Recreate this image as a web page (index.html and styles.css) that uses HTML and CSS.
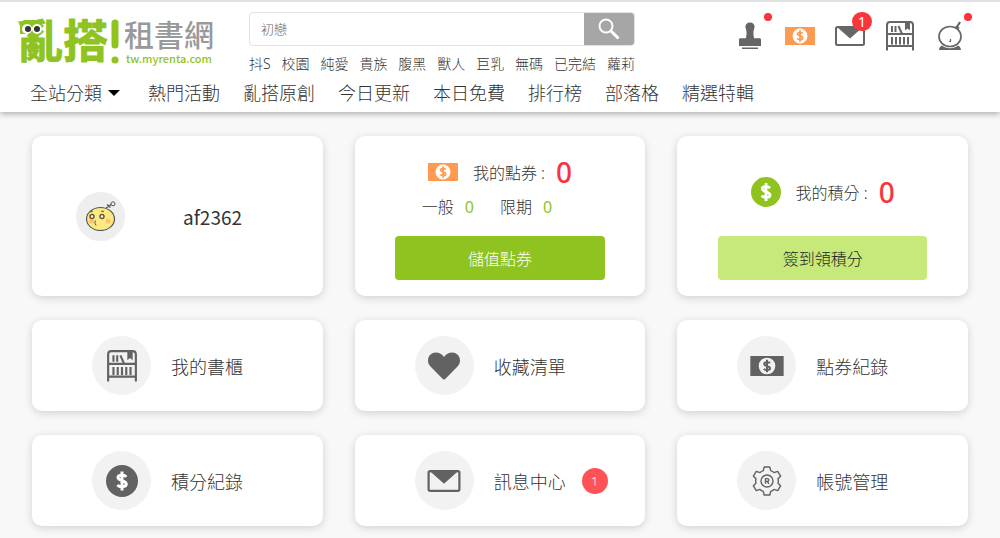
FILE: index.html
```html
<!doctype html>
<html lang="zh-Hant">
<head>
<meta charset="utf-8">
<meta name="viewport" content="width=device-width,initial-scale=1">
<title>亂搭!租書網</title>
<link rel="stylesheet" href="styles.css">
</head>
<body>
<!-- icons -->
<svg class="sprite" aria-hidden="true">
	<symbol id="i-stamp" viewBox="0 0 24 28">
		<path d="M12 0.5c2.800 0 4.600 1.800 4.600 4.300 0 1.600-.7 2.600-1 4.200-.3 2.200-.2 5 .6 7.200h5.300c1 0 1.500.6 1.500 1.500V24H1v-6.300c0-.9.5-1.500 1.500-1.500h5.300c.8-2.200.9-5 .6-7.200-.3-1.600-1-2.600-1-4.200C7.400 2.300 9.200.5 12 .5z"/>
		<path d="M4 25.500h16v1.500H4z"/>
	</symbol>
	<symbol id="i-bill" viewBox="0 0 30 18">
		<path fill-rule="evenodd" d="M0 0h30v18H0zM15 1.500a7.500 7.500 0 1 0 0 15 7.500 7.500 0 0 0 0-15z"/>
		<path d="M15 3.300v11.400M17.700 6.500c-1-1.300-5.200-1.400-5.200.6 0 2.200 5.200 1.500 5.200 3.900 0 2.100-4.300 2-5.500.5" fill="none" stroke="currentColor" stroke-width="1.800"/>
	</symbol>
	<symbol id="i-mail" viewBox="0 0 30 20">
		<rect x="1" y="1" width="28" height="18" rx="1.500" fill="none" stroke="currentColor" stroke-width="2"/>
		<path d="M2 1h26L15 12.500z"/>
	</symbol>
	<symbol id="i-shelf" viewBox="0 0 30 30">
		<path d="M2 29.500V4q0-3 3-3h20q3 0 3 3v25.500M2 13h26M2 25h26" fill="none" stroke="currentColor" stroke-width="2"/>
		<path d="M7 5v6M10.500 5v6M13.500 5l3.500 8M7 16v7.500M11 16v7.500M15 16v7.500M19 16v7.500M23 16v7.500" fill="none" stroke="currentColor" stroke-width="2"/>
		<path d="M20 1h5v8.500L22.500 7.500 20 9.500z"/>
	</symbol>
	<symbol id="i-planet" viewBox="0 0 26 30">
		<ellipse cx="13" cy="15.500" rx="11" ry="10" fill="none" stroke="currentColor" stroke-width="1.700"/>
		<path d="M5 24.500c4 3.600 12 3.600 16 0 2 1 2.800 2.500 3 4.500H2c.2-2 1-3.500 3-4.500z"/>
		<path d="M19 7.500l4-6.500M18.500 5.500l3.500 2" fill="none" stroke="currentColor" stroke-width="2.200"/>
		<path d="M13.500 18v2.500h-1.300" fill="none" stroke="currentColor" stroke-width="1.200"/>
	</symbol>
	<symbol id="i-coin" viewBox="0 0 32 32">
		<circle cx="16" cy="16" r="16"/>
		<path d="M16 6.500v19M20.300 11.800c-1.500-2-8.300-2.500-8.300.8 0 3.600 8.300 2.600 8.300 6.500 0 3.300-6.800 3.200-8.900.8" fill="none" stroke="#fff" stroke-width="3"/>
	</symbol>
	<symbol id="i-heart" viewBox="0 0 32 28">
		<path d="M16 27.500c-.7 0-1.200-.5-1.700-1L2.500 14.500C.8 12.700 0 10.700 0 8.500 0 3.700 3.600.5 8 .5c3.400 0 6 1.600 8 4.500 2-2.900 4.600-4.500 8-4.500 4.400 0 8 3.200 8 8 0 2.200-.8 4.200-2.500 6L17.700 26.500c-.5.5-1 1-1.700 1z"/>
	</symbol>
	<symbol id="i-gear" viewBox="0 0 30 30">
		<g fill="none" stroke="currentColor" stroke-width="1.400" stroke-linejoin="round">
			<path d="M12.200 1h5.600l.9 3.600q2 .6 3.300 2l3.700-1.200 2.900 4.800-2.600 2.600q.7 2.200 0 4.400l2.600 2.600-2.900 4.800-3.700-1.200q-1.300 1.400-3.300 2l-.9 3.600h-5.600l-.9-3.600q-2-.6-3.300-2l-3.700 1.200-2.900-4.800L4 17.200q-.7-2.200 0-4.400l-2.600-2.600 2.900-4.800L8 6.600q1.300-1.400 3.300-2z"/>
			<circle cx="15" cy="15" r="6"/>
			<path d="M13.500 17.800v-5.200h1.800q1.500 0 1.500 1.400t-1.500 1.400h-1.500M15.300 15.400l1.600 2.400"/>
		</g>
	</symbol>
</svg>

<header class="header">
	<div class="top">
		<a class="logo" href="#" aria-label="亂搭!租書網">
			<svg viewBox="0 0 200 50" width="200" height="50">
				<g class="logo-main">
					<text x="0" y="42">亂搭</text>
					<path d="M97 7v22" stroke-width="7"/>
					<circle cx="97" cy="44" r="3.500" stroke="none"/>
				</g>
				<path d="M0 5c3 1 5 0 6-1h9c2 1 4 2 8 1l-2 5v8H2v-8z" fill="#8fc31f"/>
				<circle cx="9" cy="13" r="5" fill="#fff"/>
				<circle cx="19" cy="13" r="5" fill="#fff"/>
				<circle cx="10" cy="13" r="3"/>
				<circle cx="19" cy="13" r="3"/>
				<text class="logo-name" x="106" y="30">租書網</text>
				<text class="logo-url" x="108" y="47">tw.myrenta.com</text>
			</svg>
		</a>
		<div class="search">
			<form class="search-box">
				<input type="text" placeholder="初戀" aria-label="搜尋">
				<button type="button" aria-label="搜尋">
					<svg viewBox="0 0 22 22" width="22" height="22"><circle cx="8" cy="8" r="6.500"/><path d="M13 13l7.500 7.500" stroke-width="3"/></svg>
				</button>
			</form>
			<div class="tags">
				<a href="#">抖S</a>
				<a href="#">校園</a>
				<a href="#">純愛</a>
				<a href="#">貴族</a>
				<a href="#">腹黑</a>
				<a href="#">獸人</a>
				<a href="#">巨乳</a>
				<a href="#">無碼</a>
				<a href="#">已完結</a>
				<a href="#">蘿莉</a>
			</div>
		</div>
		<div class="tools">
			<a href="#" aria-label="簽到"><svg width="24" height="28"><use href="#i-stamp"/></svg><i class="dot"></i></a>
			<a href="#" aria-label="點券" class="orange"><svg width="30" height="18"><use href="#i-bill"/></svg></a>
			<a href="#" aria-label="訊息"><svg width="30" height="20"><use href="#i-mail"/></svg><span class="num">1</span></a>
			<a href="#" aria-label="書櫃"><svg width="30" height="30"><use href="#i-shelf"/></svg></a>
			<a href="#" aria-label="會員"><svg width="26" height="30"><use href="#i-planet"/></svg><i class="dot"></i></a>
		</div>
	</div>
	<nav class="nav">
		<button type="button" class="all">全站分類<svg width="12" height="6" viewBox="0 0 12 6"><path d="M0 0h12L6 6z"/></svg></button>
		<a href="#">熱門活動</a>
		<a href="#">亂搭原創</a>
		<a href="#">今日更新</a>
		<a href="#">本日免費</a>
		<a href="#">排行榜</a>
		<a href="#">部落格</a>
		<a href="#">精選特輯</a>
	</nav>
</header>

<main class="main">
	<section class="card user">
		<span class="avatar">
			<svg viewBox="0 0 30 30" width="30" height="30">
				<path d="M20 7c2-1 3-2 5.500-4M21 3.500l3.500 3" fill="none" stroke="#555" stroke-width="1.200"/>
				<circle cx="27" cy="2.800" r="2" fill="#eee" stroke="#555"/>
				<ellipse cx="14.500" cy="18" rx="14" ry="11.500" fill="#fbe983" stroke="#555" stroke-width="1.200"/>
				<circle cx="5.500" cy="20" r="2.500" fill="#fbc46d"/>
				<circle cx="22" cy="20" r="2.500" fill="#fbc46d"/>
				<circle cx="6" cy="15.500" r="2" fill="#fff" stroke="#665b30" stroke-width="1.500"/>
				<circle cx="16" cy="15.500" r="2" fill="#fff" stroke="#665b30" stroke-width="1.500"/>
				<path d="M9.500 19.500l-.8 2.500 1.500 2.500M4 11l3-.8M15 10l3 .5" fill="none" stroke="#665b30"/>
			</svg>
		</span>
		<span class="user-name">af2362</span>
	</section>
	<section class="card wallet">
		<div class="wallet-info">
			<p class="total"><svg class="orange" width="30" height="18"><use href="#i-bill"/></svg><span>我的點券 :</span><b>0</b></p>
			<p class="detail"><span>一般<em>0</em></span><span>限期<em>0</em></span></p>
		</div>
		<button type="button" class="btn">儲值點券</button>
	</section>
	<section class="card wallet score">
		<div class="wallet-info">
			<p class="total"><svg class="green" width="30" height="30"><use href="#i-coin"/></svg><span>我的積分 :</span><b>0</b></p>
		</div>
		<button type="button" class="btn btn-light">簽到領積分</button>
	</section>

	<a class="card link" href="#"><span class="ico"><svg width="32" height="32"><use href="#i-shelf"/></svg></span>我的書櫃</a>
	<a class="card link" href="#"><span class="ico"><svg width="34" height="28"><use href="#i-heart"/></svg></span>收藏清單</a>
	<a class="card link" href="#"><span class="ico"><svg width="34" height="20"><use href="#i-bill"/></svg></span>點券紀錄</a>
	<a class="card link" href="#"><span class="ico"><svg width="32" height="32"><use href="#i-coin"/></svg></span>積分紀錄</a>
	<a class="card link" href="#"><span class="ico"><svg width="34" height="22"><use href="#i-mail"/></svg></span>訊息中心<span class="count">1</span></a>
	<a class="card link" href="#"><span class="ico"><svg width="30" height="30"><use href="#i-gear"/></svg></span>帳號管理</a>
</main>
</body>
</html>
```
FILE: styles.css
```css
* {
	box-sizing: border-box;
}
body {
	margin: 0;
	background: #f8f8f8;
	color: #333;
	font-family: "Noto Sans", "Noto Sans CJK TC", sans-serif;
	font-weight: 300;
}
p {
	margin: 0;
}
a {
	color: inherit;
	text-decoration: none;
}
button,
input {
	margin: 0;
	padding: 0;
	border: 0;
	background: none;
	color: inherit;
	font: inherit;
}
button {
	cursor: pointer;
}
svg {
	display: block;
	flex: none;
	fill: currentColor;
}
.sprite {
	position: absolute;
	width: 0;
	height: 0;
}
.orange {
	color: #ff9b50;
}
.green {
	color: #8fc31f;
}

/* header */
.header {
	position: relative;
	border-top: 2px solid #e2e2e2;
	background: #fff;
	box-shadow: 0 2px 6px rgba(0,0,0,.3);
}
.top {
	display: flex;
	align-items: flex-start;
	padding: 10px 25px 0 18px;
}
.logo {
	margin: 4px 31px 0 0;
}
.logo svg {
	overflow: visible;
}
.logo-main {
	fill: #8fc31f;
	stroke: #8fc31f;
	stroke-width: 1;
	stroke-linecap: round;
	stroke-linejoin: round;
	font-size: 45px;
	font-weight: 700;
}
.logo-name {
	fill: #999;
	font-size: 30px;
	font-weight: 500;
}
.logo-url {
	fill: #8fc31f;
	font-family: "Noto Sans CJK TC", sans-serif;
	font-size: 11px;
	font-weight: 500;
}
.search {
	flex: 0 1 386px;
}
.search-box {
	display: flex;
	height: 34px;
	border: 1px solid #e2e2e2;
	border-radius: 4px;
	overflow: hidden;
}
.search-box input {
	flex: 1;
	min-width: 0;
	padding: 0 11px;
	outline: 0;
	font-size: 13px;
}
.search-box input::placeholder {
	color: #666;
}
.search-box button {
	display: flex;
	align-items: center;
	justify-content: center;
	width: 50px;
	background: #a6a6a6;
}
.search-box svg {
	fill: none;
	stroke: #fff;
	stroke-width: 2;
}
.tags {
	display: flex;
	justify-content: space-between;
	margin-top: 7px;
	font-size: 14px;
	line-height: 22px;
	white-space: nowrap;
}
.tools {
	display: flex;
	margin-left: auto;
	color: #666;
}
.tools a {
	position: relative;
	display: flex;
	align-items: center;
	justify-content: center;
	width: 50px;
	height: 48px;
}
.tools .orange {
	color: #ff9b50;
}
.dot {
	position: absolute;
	right: 3px;
	top: 1px;
	width: 8px;
	height: 8px;
	border-radius: 50%;
	background: #f9343b;
}
.num {
	position: absolute;
	right: 3px;
	top: 0;
	width: 20px;
	border-radius: 10px;
	background: #f9343b;
	color: #fff;
	font-size: 14px;
	font-weight: 400;
	line-height: 19px;
	text-align: center;
}
.nav {
	display: flex;
	gap: 23px;
	padding: 2px 30px 3px;
	font-size: 18px;
	line-height: 32px;
	white-space: nowrap;
}
.all {
	display: flex;
	align-items: center;
	gap: 6px;
	margin-right: 5px;
}
.all svg {
	color: #000;
}

/* cards */
.main {
	display: grid;
	grid-template-columns: repeat(3, 1fr);
	gap: 24px 32px;
	padding: 24px 32px;
}
.card {
	border-radius: 10px;
	background: #fff;
	box-shadow: 0 2px 8px rgba(0,0,0,.16);
}
.user {
	display: flex;
	align-items: center;
	gap: 58px;
	padding: 0 44px;
}
.avatar {
	display: flex;
	align-items: center;
	justify-content: center;
	width: 49px;
	height: 49px;
	border-radius: 50%;
	background: #eee;
}
.user-name {
	font-family: "Noto Sans CJK TC", sans-serif;
	font-size: 19px;
	font-weight: 400;
}
.wallet {
	display: flex;
	flex-direction: column;
	align-items: center;
	min-height: 160px;
	padding-bottom: 16px;
}
.wallet-info {
	display: flex;
	flex: 1;
	flex-direction: column;
	justify-content: center;
}
.score .wallet-info {
	padding-top: 12px;
}
.total {
	display: flex;
	align-items: center;
	justify-content: center;
	height: 42px;
	font-size: 16px;
}
.total svg {
	margin-right: 15px;
}
.total b {
	margin-left: 11px;
	color: #f9343b;
	font-size: 28px;
	font-weight: 500;
}
.detail {
	display: flex;
	font-size: 16px;
	line-height: 28px;
}
.detail span {
	margin-right: 26px;
}
.detail em {
	margin-left: 11px;
	color: #8fc31f;
	font-style: normal;
	font-weight: 400;
}
.btn {
	width: 72%;
	height: 44px;
	border-radius: 4px;
	background: #8fc31f;
	color: #fff;
	font-size: 16px;
}
.btn-light {
	background: #c7e97a;
	color: #222;
}
.link {
	display: flex;
	align-items: center;
	padding: 16px 16px 16px 60px;
	font-size: 18px;
}
.ico {
	display: flex;
	align-items: center;
	justify-content: center;
	width: 59px;
	height: 59px;
	margin-right: 20px;
	border-radius: 50%;
	background: #f2f2f2;
	color: #626262;
}
.count {
	width: 26px;
	margin-left: 16px;
	border-radius: 50%;
	background: #ff5257;
	color: #fff;
	font-size: 13px;
	line-height: 26px;
	text-align: center;
}
```
